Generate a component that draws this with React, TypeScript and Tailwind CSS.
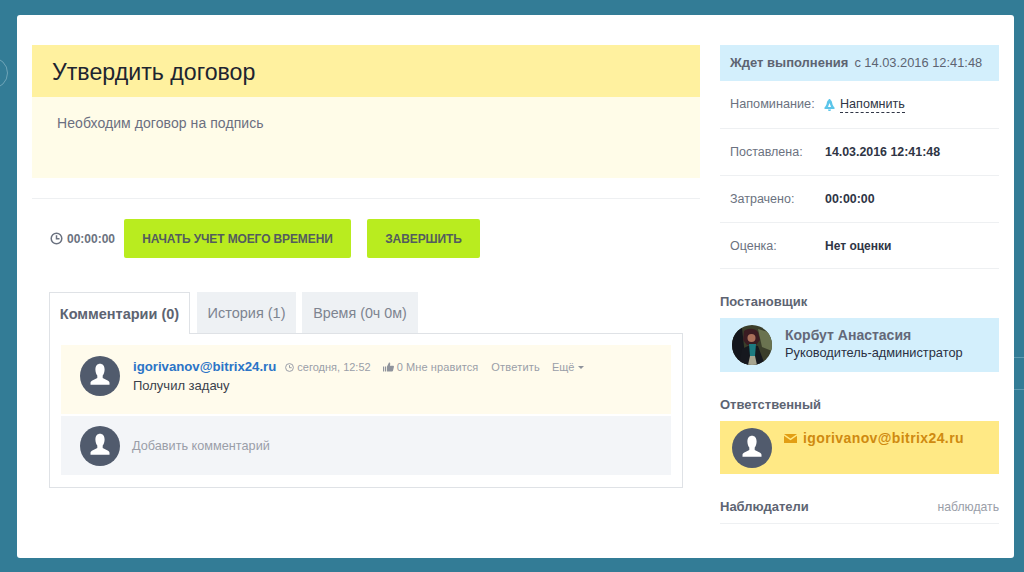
const Person = ({ size = 40 }: { size?: number }) => (
  <svg width={size} height={size} viewBox="0 0 40 40" className="shrink-0 block">
    <circle cx="20" cy="20" r="20" fill="#515b6d" />
    <path d="M15.400 13.500c0-3.600 1.900-5.700 4.600-5.700s4.600 2.100 4.600 5.700c0 2.600-.9 4.700-1.900 6.100v2.500l5.400 2.600c.9.500 1.400 1.200 1.400 2.200v1.800H10.500v-1.800c0-1 .5-1.700 1.400-2.200l5.400-2.600v-2.500c-1-1.400-1.900-3.500-1.900-6.100z" fill="#fff" />
  </svg>
);

const Row = ({ label, value }: { label: string; value: string }) => (
  <div className="h-[47px] flex items-center border-b border-[#eef0f2] pl-[10px] pt-[1px]">
    <span className="w-[95px] text-[12.500px] text-[#6b7280]">{label}</span>
    <span className="text-[12.400px] font-bold text-[#2f3545]">{value}</span>
  </div>
);

export default function App() {
  return (
    <div className="relative w-[1024px] h-[572px] overflow-hidden bg-[#337c96] pt-[15px] pl-[17px] font-['Liberation_Sans',Arial,sans-serif]">
      <div className="absolute left-[-24px] top-[57px] w-[32px] h-[32px] rounded-full border border-[#6fa5b8]" />
      <div className="absolute left-[990px] top-[357px] w-[120px] h-[33px] rounded-full border border-[#5e9ab0]" />
      <div className="relative w-[997px] h-[543px] bg-white rounded-[3px] pt-[30px] pl-[15px] flex">
        <div className="w-[668px] shrink-0">
          <div className="h-[52px] bg-[#fff19f] flex items-center pl-[20px] pt-[2px] text-[23.200px] text-[#1d2430]">Утвердить договор</div>
          <div className="h-[81px] bg-[#fffce8] pl-[25px] pt-[18px] text-[14px] leading-[16px] tracking-[0.070px] text-[#6b6f80]">Необходим договор на подпись</div>
          <div className="h-[1px] mt-[20px] bg-[#eef0f2]" />
          <div className="mt-[20px] flex items-center h-[39px] pl-[18px]">
            <svg width="13" height="13" viewBox="0 0 13 13" fill="none" stroke="#6b7280" strokeWidth="1.500" className="shrink-0">
              <circle cx="6.500" cy="6.500" r="5.300" />
              <path d="M6.500 3.300v3.500H9.500" />
            </svg>
            <span className="ml-[4px] w-[57px] text-[12px] font-bold text-[#6b7280]">00:00:00</span>
            <button className="w-[227px] h-[39px] bg-[#b9ec1f] rounded-[2px] text-[12px] tracking-[-0.120px] font-bold text-[#535c5e]">НАЧАТЬ УЧЕТ МОЕГО ВРЕМЕНИ</button>
            <button className="ml-[16px] w-[113px] h-[39px] bg-[#b9ec1f] rounded-[2px] text-[12px] tracking-[-0.100px] font-bold text-[#535c5e]">ЗАВЕРШИТЬ</button>
          </div>
          <div className="ml-[17px] mt-[34px] w-[634px]">
            <div className="flex h-[42px] relative z-10">
              <div className="w-[141px] h-[42px] bg-white border border-b-0 border-[#dfe2e6] flex items-center justify-center pt-[2px] text-[14.500px] font-bold text-[#5d6472]">Комментарии (0)</div>
              <div className="ml-[7px] w-[99px] h-[41px] bg-[#eef1f4] flex items-center justify-center pt-[2px] text-[14.500px] text-[#7d8490]">История (1)</div>
              <div className="ml-[6px] w-[116px] h-[41px] bg-[#eef1f4] flex items-center justify-center pt-[2px] text-[14.300px] text-[#7d8490]">Время (0ч 0м)</div>
            </div>
            <div className="-mt-[1px] h-[155px] border border-[#dfe2e6] pt-[11px] px-[11px]">
              <div className="h-[69px] bg-[#fffbec] pl-[19px] pt-[11px] flex">
                <Person />
                <div className="ml-[13px]">
                  <div className="flex items-center h-[18px] mt-[2px]">
                    <span className="text-[13.200px] font-bold text-[#2b74c7]">igorivanov@bitrix24.ru</span>
                    <svg width="9" height="9" viewBox="0 0 9 9" fill="none" stroke="#9a9ea8" strokeWidth="1" className="ml-[9px] shrink-0">
                      <circle cx="4.500" cy="4.500" r="3.900" />
                      <path d="M4.500 2.200v2.500H6.700" />
                    </svg>
                    <span className="ml-[3px] text-[11px] text-[#9a9ea8]">сегодня, 12:52</span>
                    <svg width="11" height="10" viewBox="0 0 11 10" fill="#8f939c" className="ml-[12px] shrink-0">
                      <path d="M0 4.500h1.200V9.500H0zM2 4.500h1.200V9.500H2zM4 4.500 6 .5c1 0 1.400.8 1.200 1.700L6.900 3.700h3c.8 0 1.200.6 1 1.300L10 8.800c-.2.500-.5.700-1 .7H4z" />
                    </svg>
                    <span className="ml-[3px] text-[11px] tracking-[0.100px] text-[#9a9ea8]">0 Мне нравится</span>
                    <span className="ml-[13px] text-[11px] tracking-[0.200px] text-[#9a9ea8]">Ответить</span>
                    <span className="ml-[12px] text-[11px] text-[#9a9ea8]">Ещё</span>
                    <span className="ml-[4px] w-0 h-0 border-x-[3px] border-x-transparent border-t-[3px] border-t-[#8f939c]" />
                  </div>
                  <div className="text-[13px] leading-[16px] mt-[2px] text-[#3a3f4b]">Получил задачу</div>
                </div>
              </div>
              <div className="mt-[2px] h-[59px] bg-[#f3f5f8] pl-[19px] pt-[10px] flex">
                <Person />
                <span className="ml-[12px] mt-[12px] text-[12.700px] leading-[16px] text-[#9a9ea8]">Добавить комментарий</span>
              </div>
            </div>
          </div>
        </div>
        <div className="w-[279px] ml-[20px] shrink-0">
          <div className="h-[36px] bg-[#d3effc] flex items-center pl-[10px] text-[12.850px] text-[#5d6472]">
            <b className="text-[13px]">Ждет выполнения</b><span className="ml-[6px]">с 14.03.2016 12:41:48</span>
          </div>
          <div className="h-[48px] flex items-center border-b border-[#eef0f2] pl-[10px] pt-[1px]">
            <span className="w-[94px] text-[12.700px] text-[#6b7280]">Напоминание:</span>
            <svg width="11" height="12" viewBox="0 0 11 12" fill="#5cc5ea" className="shrink-0 mr-[5px]">
              <path d="M5.500 0c.7 0 1 .4 1 1 1 .5 1.500 1.500 1.700 3 .2 1.500 1 3 2.300 4.500V10H.5V8.500C1.800 7 2.600 5.500 2.800 4 3 2.500 3.500 1.500 4.500 1c0-.6.3-1 1-1zM4 10.500h3C7 11.500 6.300 12 5.500 12S4 11.500 4 10.500z" />
              <path d="M5.500 4 7 8H4z" fill="#fff" />
            </svg>
            <span className="text-[12.600px] leading-[15px] text-[#2f3545] border-b border-dashed border-[#2f3545]">Напомнить</span>
          </div>
          <Row label="Поставлена:" value="14.03.2016 12:41:48" />
          <Row label="Затрачено:" value="00:00:00" />
          <div className="h-[46px] flex items-center border-b border-[#eef0f2] pl-[10px] pt-[1px]">
            <span className="w-[95px] text-[12.500px] text-[#6b7280]">Оценка:</span>
            <span className="text-[12px] font-bold text-[#2f3545]">Нет оценки</span>
          </div>
          <div className="mt-[25px] text-[13px] leading-[16px] font-bold text-[#5d6472]">Постановщик</div>
          <div className="mt-[8px] h-[54px] bg-[#d3effc] flex items-center pl-[12px]">
            <svg width="40" height="40" viewBox="0 0 40 40" className="shrink-0 block">
              <defs>
                <clipPath id="ava"><circle cx="20" cy="20" r="20" /></clipPath>
              </defs>
              <g clipPath="url(#ava)">
                <rect width="40" height="40" fill="#3a3e2a" />
                <path d="M26 4 40 8v18L30 22z" fill="#6a7350" />
                <path d="M0 8 10 3l4 37H0z" fill="#14161c" />
                <path d="M12 6c4-3 11-3 14 1l2 8-4 5H15l-4-5z" fill="#3a1c22" />
                <ellipse cx="19.500" cy="13" rx="4" ry="4" fill="#a9705a" />
                <path d="M7 40 10 24l8-4 8 1 7 19z" fill="#16181e" />
                <path d="M17 19h7l-1 12h-5z" fill="#1c7a80" />
                <path d="M18 31h5l2 9h-9z" fill="#a7a48f" />
              </g>
            </svg>
            <div className="ml-[13px] -mt-[2px]">
              <div className="text-[14px] leading-[16px] font-bold text-[#636878]">Корбут Анастасия</div>
              <div className="text-[12.800px] leading-[16px] mt-[2px] text-[#2a2f42]">Руководитель-администратор</div>
            </div>
          </div>
          <div className="mt-[25px] text-[13px] leading-[16px] font-bold text-[#5d6472]">Ответственный</div>
          <div className="mt-[8px] h-[53px] bg-[#ffe985] pl-[12px] pt-[7px] flex">
            <Person />
            <div className="ml-[12px] mt-[2px] h-[16px] flex items-center">
              <svg width="13" height="9" viewBox="0 0 13 9" fill="#e29e14" className="shrink-0">
                <path d="M0 0h13L6.500 4.500zM0 1.800l6.500 4.400L13 1.800V9H0z" />
              </svg>
              <span className="ml-[6px] text-[14px] font-bold text-[#cf8a10] tracking-[0.400px]">igorivanov@bitrix24.ru</span>
            </div>
          </div>
          <div className="mt-[25px] h-[25px] flex justify-between border-b border-[#eef0f2]">
            <span className="text-[13px] leading-[16px] font-bold text-[#5d6472]">Наблюдатели</span>
            <span className="text-[12.200px] leading-[16px] text-[#9a9ea8]">наблюдать</span>
          </div>
        </div>
      </div>
    </div>
  );
}
